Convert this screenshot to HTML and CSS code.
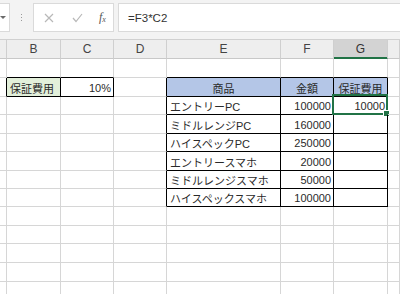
FILE: index.html
```html
<!DOCTYPE html>
<html lang="ja">
<head>
<meta charset="utf-8">
<link rel="stylesheet" href="styles.css">
</head>
<body>
<div class="app">
  <div class="toolbar">
    <div class="namebox"><span class="caret"></span></div>
    <div class="grip"><i></i><i></i><i></i></div>
    <div class="fxbox">
      <svg class="ic" width="10" height="10" viewBox="0 0 10 10"><path d="M1 1 L9 9 M9 1 L1 9" stroke="#b8b8b8" stroke-width="1.2" fill="none"/></svg>
      <svg class="ic" width="11" height="10" viewBox="0 0 11 10"><path d="M1 5 L4 8.5 L10 1" stroke="#b8b8b8" stroke-width="1.2" fill="none"/></svg>
      <span class="fx">f<sub>x</sub></span>
    </div>
    <div class="formula">=F3*C2</div>
  </div>
  <div class="sheet">
    <div class="row hdr">
      <div class="c"></div><div class="c">B</div><div class="c">C</div><div class="c">D</div><div class="c">E</div><div class="c">F</div><div class="c sel">G</div><div class="c"></div>
    </div>
    <div class="row h19">
      <div class="c"></div><div class="c bb"></div><div class="c bb"></div><div class="c"></div><div class="c bb"></div><div class="c bb"></div><div class="c bb"></div><div class="c"></div>
    </div>
    <div class="row h19">
      <div class="c rb"></div><div class="c rb bb green">保証費用</div><div class="c rb bb num">10%</div><div class="c rb"></div><div class="c rb bb blue ctr">商品</div><div class="c rb bb blue ctr">金額</div><div class="c rb bb blue ctr">保証費用</div><div class="c"></div>
    </div>
    <div class="row h18">
      <div class="c"></div><div class="c"></div><div class="c"></div><div class="c rb"></div><div class="c rb bb">エントリーPC</div><div class="c rb bb num">100000</div><div class="c rb bb num active">10000<span class="sel-box"><span class="handle"></span></span></div><div class="c"></div>
    </div>
    <div class="row h19">
      <div class="c"></div><div class="c"></div><div class="c"></div><div class="c rb"></div><div class="c rb bb">ミドルレンジPC</div><div class="c rb bb num">160000</div><div class="c rb bb"></div><div class="c"></div>
    </div>
    <div class="row h18">
      <div class="c"></div><div class="c"></div><div class="c"></div><div class="c rb"></div><div class="c rb bb">ハイスペックPC</div><div class="c rb bb num">250000</div><div class="c rb bb"></div><div class="c"></div>
    </div>
    <div class="row h19">
      <div class="c"></div><div class="c"></div><div class="c"></div><div class="c rb"></div><div class="c rb bb">エントリースマホ</div><div class="c rb bb num">20000</div><div class="c rb bb"></div><div class="c"></div>
    </div>
    <div class="row h18">
      <div class="c"></div><div class="c"></div><div class="c"></div><div class="c rb"></div><div class="c rb bb">ミドルレンジスマホ</div><div class="c rb bb num">50000</div><div class="c rb bb"></div><div class="c"></div>
    </div>
    <div class="row h18">
      <div class="c"></div><div class="c"></div><div class="c"></div><div class="c rb"></div><div class="c rb bb">ハイスペックスマホ</div><div class="c rb bb num">100000</div><div class="c rb bb"></div><div class="c"></div>
    </div>
    <div class="row h19">
      <div class="c"></div><div class="c"></div><div class="c"></div><div class="c"></div><div class="c"></div><div class="c"></div><div class="c"></div><div class="c"></div>
    </div>
    <div class="row h18">
      <div class="c"></div><div class="c"></div><div class="c"></div><div class="c"></div><div class="c"></div><div class="c"></div><div class="c"></div><div class="c"></div>
    </div>
    <div class="row h19">
      <div class="c"></div><div class="c"></div><div class="c"></div><div class="c"></div><div class="c"></div><div class="c"></div><div class="c"></div><div class="c"></div>
    </div>
    <div class="row h19">
      <div class="c"></div><div class="c"></div><div class="c"></div><div class="c"></div><div class="c"></div><div class="c"></div><div class="c"></div><div class="c"></div>
    </div>
    <div class="row h19">
      <div class="c"></div><div class="c"></div><div class="c"></div><div class="c"></div><div class="c"></div><div class="c"></div><div class="c"></div><div class="c"></div>
    </div>
  </div>
</div>
</body>
</html>
```
FILE: styles.css
```css
html, body {
  margin: 0;
  padding: 0;
  background: #ffffff;
  overflow: hidden;
}
.app {
  width: 400px;
  height: 294px;
  overflow: hidden;
  font-family: "Liberation Sans", "Noto Sans CJK JP", sans-serif;
}
.toolbar {
  height: 39px;
  box-sizing: border-box;
  background: #f3f3f3;
  display: flex;
  align-items: flex-start;
  padding-top: 3px;
}
.namebox {
  width: 10px;
  height: 29px;
  box-sizing: border-box;
  background: #fff;
  border: 1px solid #dadada;
  border-left: none;
  display: flex;
  align-items: center;
  justify-content: center;
}
.caret {
  width: 0;
  height: 0;
  border-left: 3px solid transparent;
  border-right: 3px solid transparent;
  border-top: 3px solid #6a6a6a;
  margin-left: -3px;
}
.grip {
  width: 23px;
  height: 29px;
  display: flex;
  flex-direction: column;
  align-items: center;
  justify-content: center;
  gap: 2px;
}
.grip i {
  display: block;
  width: 1px;
  height: 1px;
  background: #9a9a9a;
}
.fxbox {
  width: 81px;
  height: 29px;
  box-sizing: border-box;
  background: #fff;
  border: 1px solid #dadada;
  display: flex;
  align-items: center;
  padding-left: 10px;
  gap: 18px;
}
.fx {
  font-family: "Liberation Serif", serif;
  font-style: italic;
  font-size: 12px;
  color: #555;
  margin-left: -2px;
}
.fx sub {
  font-size: 8px;
  vertical-align: -1px;
}
.formula {
  flex: 1;
  height: 29px;
  box-sizing: border-box;
  margin-left: 4px;
  background: #fff;
  border: 1px solid #dadada;
  border-right: none;
  padding-left: 9px;
  font-size: 11.5px;
  color: #333;
  display: flex;
  align-items: center;
}
.sheet {
  display: flex;
  flex-direction: column;
}
.row {
  display: grid;
  grid-template-columns: 7px 54px 53px 53px 114px 53px 54px 1fr;
}
.h19 { height: 19px; }
.h18 { height: 18px; }
.hdr {
  height: 20px;
  border-top: 1px solid #d0d0d0;
  box-sizing: border-box;
  background: #eeeeee;
}
.c {
  box-sizing: border-box;
  border-right: 1px solid #d6d6d6;
  border-bottom: 1px solid #d6d6d6;
  font-size: 11px;
  color: #2a2a2a;
  display: flex;
  align-items: center;
  padding: 1px 3px 0 3px;
  white-space: nowrap;
  position: relative;
}
.hdr .c {
  justify-content: center;
  font-size: 12px;
  color: #444;
  border-right-color: #cfcfcf;
  border-bottom-color: #c8c8c8;
  padding: 0;
}
.hdr .c.sel {
  background: #d3d3d3;
  color: #333;
  border-bottom: 1px solid #217346;
  box-shadow: inset 0 -1px 0 #217346;
}
.rb { border-right-color: #000; }
.bb { border-bottom-color: #000; }
.green { background: #e2efda; }
.blue { background: #b4c6e7; }
.ctr { justify-content: center; }
.num { justify-content: flex-end; padding-right: 2px; }
.sel-box {
  position: absolute;
  left: -2px;
  top: -3px;
  width: 56px;
  height: 21px;
  box-sizing: border-box;
  border: 2px solid #217346;
}
.handle {
  position: absolute;
  right: -4px;
  bottom: -4px;
  width: 5px;
  height: 5px;
  background: #217346;
  border: 1px solid #fff;
}
```
